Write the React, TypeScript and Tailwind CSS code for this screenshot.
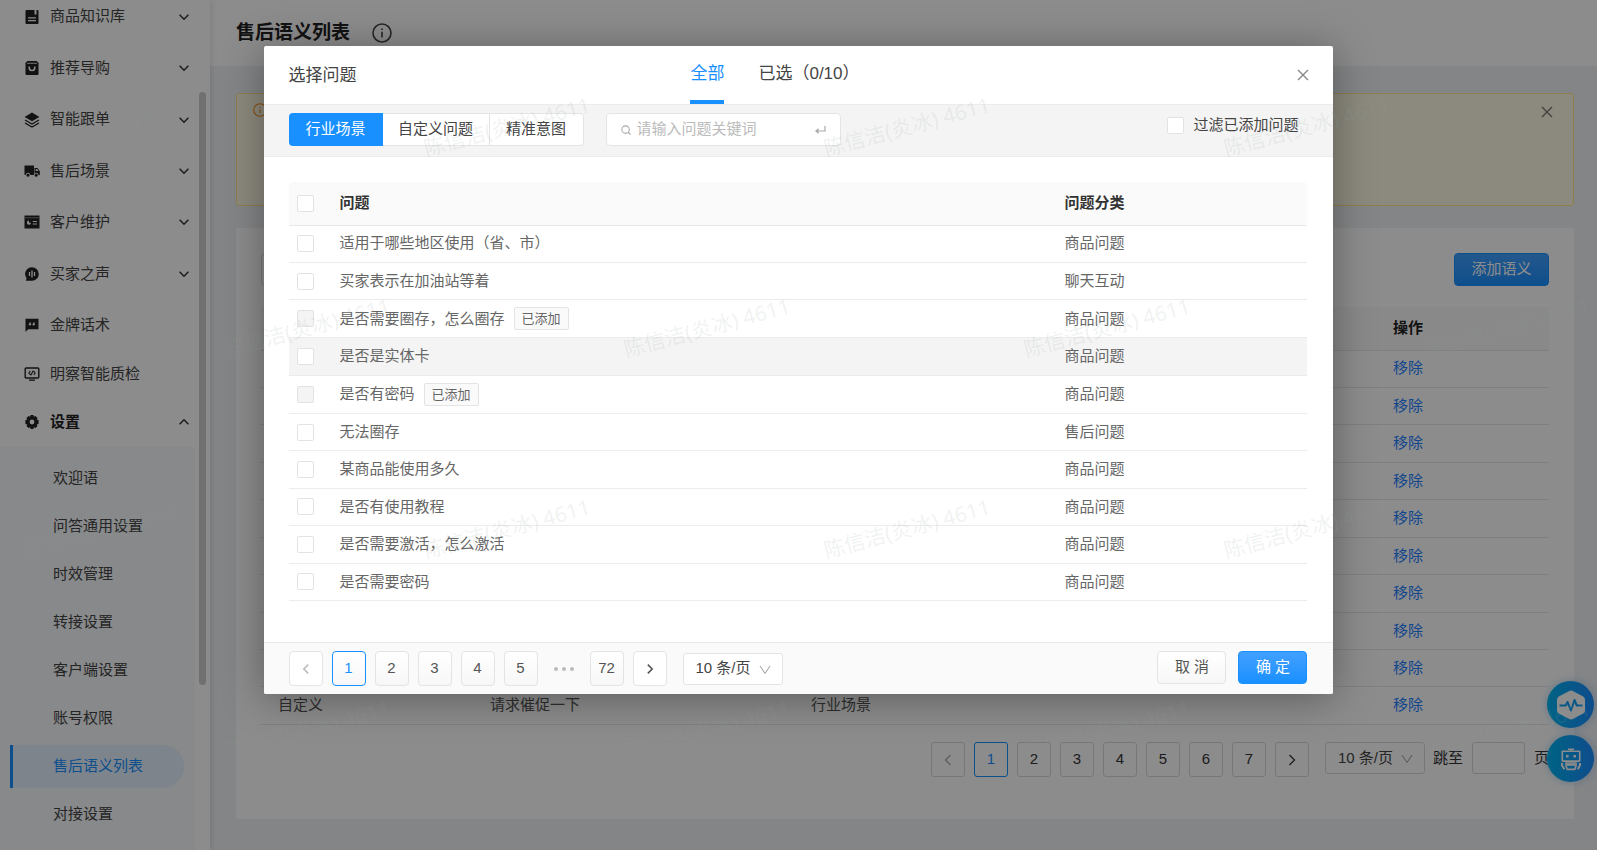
import type { ReactNode } from "react";

const sans = "font-['Liberation_Sans','Noto_Sans_CJK_SC',sans-serif]";

/* ---------- icons ---------- */

function Chevron({ dir, className }: { dir: "up" | "down" | "left" | "right"; className?: string }) {
  const d = {
    up: "M3 10.5 8 5.5l5 5",
    down: "M3 5.5l5 5 5-5",
    left: "M10.5 3l-5 5 5 5",
    right: "M5.5 3l5 5-5 5",
  }[dir];
  return (
    <svg viewBox="0 0 16 16" fill="none" stroke="currentColor" aria-hidden="true" className={className}>
      <path d={d} />
    </svg>
  );
}

function CloseIcon({ className }: { className?: string }) {
  return (
    <svg viewBox="0 0 12 12" fill="none" stroke="currentColor" strokeWidth="1.4" aria-hidden="true" className={className}>
      <path d="M1 1l10 10M11 1L1 11" />
    </svg>
  );
}

function InfoIcon({ className }: { className?: string }) {
  return (
    <svg viewBox="0 0 20 20" fill="none" stroke="currentColor" strokeWidth="1.6" aria-hidden="true" className={className}>
      <circle cx="10" cy="10" r="9" />
      <path d="M10 8.8v5.6" />
      <circle cx="10" cy="6.2" r="0.5" fill="currentColor" strokeWidth="1" />
    </svg>
  );
}

function MenuSvg({ children }: { children: ReactNode }) {
  return (
    <svg viewBox="0 0 16 16" fill="currentColor" aria-hidden="true" className="size-4 shrink-0 text-[#222]">
      {children}
    </svg>
  );
}

const icons = {
  book: (
    <MenuSvg>
      <path d="M2.5 1h8v4.5h2V1h1a1 1 0 0 1 1 1v12a1 1 0 0 1-1 1h-11a1 1 0 0 1-1-1V2a1 1 0 0 1 1-1z" />
      <path d="M4 8.8h8M4 11.6h8" stroke="#fff" strokeWidth="1.2" />
    </MenuSvg>
  ),
  bag: (
    <MenuSvg>
      <path d="M3.2 1h9.6l1.7 2.2V14a1 1 0 0 1-1 1h-11a1 1 0 0 1-1-1V3.200z" />
      <path d="M3 3.300h10" stroke="#fff" strokeWidth="0.8" />
      <path d="M5.200 6.500v1.200a2.800 2.800 0 0 0 5.600 0V6.500" fill="none" stroke="#fff" strokeWidth="1.500" />
    </MenuSvg>
  ),
  layers: (
    <MenuSvg>
      <path d="M8 .6 15.400 4.900 8 9.200.6 4.900z" />
      <path d="M1 8l7 4.100L15 8M1 11l7 4.100L15 11" fill="none" stroke="currentColor" strokeWidth="1.300" />
    </MenuSvg>
  ),
  truck: (
    <MenuSvg>
      <path d="M.5 2.500h9.500v9.500H.5zM10.500 5h3l2.300 3.300V12h-5.300z" />
      <circle cx="4" cy="12.200" r="2" stroke="#fff" strokeWidth="0.900" />
      <circle cx="12.200" cy="12.200" r="2" stroke="#fff" strokeWidth="0.900" />
      <path d="M11.800 6h1.300l1.300 2h-2.600z" fill="#fff" />
    </MenuSvg>
  ),
  card: (
    <MenuSvg>
      <path d="M.5 1.500h15v13H.5z" />
      <path d="M.5 3.800h15" stroke="#999" strokeWidth="0.800" />
      <path d="M5 6.600a2 2 0 0 0 0 4.200 2 2 0 0 0 2-2H5z" fill="#fff" />
      <path d="M8.800 7.500H13M8.800 10H13" stroke="#fff" strokeWidth="1.200" />
    </MenuSvg>
  ),
  voice: (
    <MenuSvg>
      <path d="M8 1.200a6.800 6.800 0 1 1 0 13.600H1.800l.8-2.600A6.800 6.800 0 0 1 8 1.200z" />
      <path d="M5.500 6v4M8 4.400v7.200M10.500 6v4" stroke="#fff" strokeWidth="1.300" />
    </MenuSvg>
  ),
  quote: (
    <MenuSvg>
      <path d="M1.500 1.800h13v10.500H4.300L1.500 14.800z" />
      <path
        d="M7 4.900C5.300 5.400 4.700 6.500 4.700 8.200h2.400V6.400H6.200C6.300 5.900 6.600 5.600 7 5.500zM10.800 4.900C9.100 5.400 8.500 6.500 8.500 8.200h2.400V6.400H10c.1-.5.4-.8.8-.9z"
        fill="#fff"
      />
    </MenuSvg>
  ),
  monitor: (
    <MenuSvg>
      <rect x="1.200" y="2" width="13.600" height="10" rx="1" fill="none" stroke="currentColor" strokeWidth="1.400" />
      <path d="M5 13.500h6v1.300H5z" />
      <path d="M6.300 5.200 4.900 7l1.600 2M9.700 9l1.400-2-1.600-2M9.200 4.700 6.800 9.300" fill="none" stroke="currentColor" strokeWidth="1.100" />
    </MenuSvg>
  ),
  gear: (
    <MenuSvg>
      <path
        fillRule="evenodd"
        d="M6.600 1h2.800l.5 1.700 1.600-.8 2 2-.8 1.600L14.600 6v4l-1.900.5.800 1.600-2 2-1.600-.8L9.400 15H6.600l-.5-1.700-1.600.8-2-2 .8-1.600L1.400 10V6l1.900-.5-.8-1.600 2-2 1.600.8zM8 5.600a2.400 2.400 0 1 0 0 4.800 2.400 2.400 0 0 0 0-4.800z"
      />
    </MenuSvg>
  ),
};

/* ---------- side menu ---------- */

const menu = [
  { label: "商品知识库", icon: icons.book, open: true },
  { label: "推荐导购", icon: icons.bag, open: true },
  { label: "智能跟单", icon: icons.layers, open: true },
  { label: "售后场景", icon: icons.truck, open: true },
  { label: "客户维护", icon: icons.card, open: true },
  { label: "买家之声", icon: icons.voice, open: true },
  { label: "金牌话术", icon: icons.quote, open: false },
];

const settings = ["欢迎语", "问答通用设置", "时效管理", "转接设置", "客户端设置", "账号权限", "售后语义列表", "对接设置"];

function Sidebar() {
  return (
    <aside className="relative z-10 flex w-[210px] shrink-0 overflow-hidden bg-white text-[15px] text-[#444] shadow-[1px_0_6px_rgba(0,0,0,0.12)]">
      <nav className="-mt-[9px] w-[195px]">
        <ul className="grid h-[360px] grid-rows-7">
          {menu.map((m) => (
            <li key={m.label} className="grid">
              <a href="#" className="flex items-center pr-1 pl-6">
                {m.icon}
                <span className="ml-[10px] flex-1">{m.label}</span>
                {m.open && <Chevron dir="down" className="size-[14px] stroke-[1.7] text-[#333]" />}
              </a>
            </li>
          ))}
        </ul>
        <ul>
          <li>
            <a href="#" className="flex h-[46px] items-center pl-6">
              {icons.monitor}
              <span className="ml-[10px]">明察智能质检</span>
            </a>
          </li>
          <li>
            <a href="#" className="flex h-[50px] items-center pr-1 pl-6 font-bold text-[#222]">
              {icons.gear}
              <span className="ml-[10px] flex-1">设置</span>
              <Chevron dir="up" className="size-[14px] stroke-[1.7] text-[#333]" />
            </a>
            <ul className="bg-[#f7f9fc] pt-[7px] pb-10">
              {settings.map((s) =>
                s === "售后语义列表" ? (
                  <li key={s} className="flex h-12 items-center pr-[11px] pl-[10px]">
                    <a
                      href="#"
                      aria-current="page"
                      className="flex h-[43px] flex-1 items-center rounded-r-full border-l-[3px] border-[#1890ff] bg-[#e3f0ff] pl-10 text-[#1890ff]"
                    >
                      {s}
                    </a>
                  </li>
                ) : (
                  <li key={s}>
                    <a href="#" className="flex h-12 items-center pl-[53px]">
                      {s}
                    </a>
                  </li>
                ),
              )}
            </ul>
          </li>
        </ul>
      </nav>
      <div className="ml-1 pt-[92px]">
        <div className="h-[593px] w-[7px] rounded-full bg-[#cdcdcd]" />
      </div>
    </aside>
  );
}

/* ---------- shared controls ---------- */

function PageSize({ label, className }: { label: string; className: string }) {
  return (
    <div className="relative">
      <select aria-label={label} className={`h-8 w-[100px] appearance-none rounded-[3px] border pl-3 text-[15px] ${className}`}>
        <option>10 条/页</option>
      </select>
      <svg
        viewBox="0 0 12 12"
        fill="none"
        stroke="currentColor"
        aria-hidden="true"
        className="pointer-events-none absolute top-[11px] right-3 size-3 text-[#999]"
      >
        <path d="M1 2l5 7.500L11 2" />
      </svg>
    </div>
  );
}

/* ---------- page behind the dialog ---------- */

const outerRows = Array.from({ length: 10 }, (_, i) => i);

function OuterPager() {
  const box = "flex h-[35px] w-[34px] items-center justify-center rounded-[3px] border";
  return (
    <div className="mt-[17px] flex items-start justify-end text-[15px] text-[#333]">
      <div className="mr-4 flex gap-[9px]">
        <button aria-label="上一页" className={`${box} border-[#d9d9d9] text-[#aaa]`}>
          <Chevron dir="left" className="size-4 stroke-[1.3]" />
        </button>
        {["1", "2", "3", "4", "5", "6", "7"].map((n) => (
          <button key={n} className={`${box} ${n === "1" ? "border-[#1890ff] text-[#1890ff]" : "border-[#d9d9d9]"}`}>
            {n}
          </button>
        ))}
        <button aria-label="下一页" className={`${box} border-[#d9d9d9]`}>
          <Chevron dir="right" className="size-4 stroke-[1.3]" />
        </button>
      </div>
      <PageSize label="列表每页条数" className="border-[#d9d9d9] bg-white text-[#444]" />
      <label className="ml-2 flex h-8 items-center gap-[9px]">
        跳至
        <input type="text" className="h-8 w-[53px] rounded-[3px] border border-[#d9d9d9]" />
        页
      </label>
    </div>
  );
}

function Main() {
  return (
    <main className="min-w-0 flex-1 bg-[#f0f2f5]">
      <header className="flex h-[66px] items-center gap-[22px] bg-white pl-[26px]">
        <h1 className="text-[19px] font-bold text-[#222]">售后语义列表</h1>
        <InfoIcon className="size-5 text-[#444]" />
      </header>
      <div className="pt-[27px] pr-[23px] pl-[26px]">
        <div className="flex h-[113px] items-start justify-between rounded-[3px] border border-[#ffe58f] bg-[#fffbe6] px-4 pt-[9px]">
          <InfoIcon className="size-[14px] text-[#fa8c16]" />
          <button aria-label="关闭提示" className="mt-[3px] mr-1 text-[#777]">
            <CloseIcon className="size-3" />
          </button>
        </div>
        <section className="mt-[22px] h-[591px] bg-white px-[25px] pt-[25px]">
          <div className="flex justify-between">
            <input aria-label="搜索语义" className="h-[33px] w-60 rounded-[4px] border border-[#d9d9d9]" />
            <button className="h-[33px] w-[95px] rounded-[4px] border border-[#1890ff] bg-linear-to-b from-[#40a0ff] to-[#1890ff] text-[15px] text-white">
              添加语义
            </button>
          </div>
          <table className="mt-[21px] h-[418px] w-full table-fixed text-left text-[15px] text-[#555]">
            <thead>
              <tr className="h-[43px] border-b border-[#e8e8e8] bg-[#fafafa] text-[#222]">
                <th className="w-[212px] pl-[17px]">分类</th>
                <th className="w-[321px] pl-[17px]">语义</th>
                <th className="pl-[17px]">类型</th>
                <th className="w-[173px] pl-[17px]">操作</th>
              </tr>
            </thead>
            <tbody>
              {outerRows.map((i) => (
                <tr key={i} className="border-b border-[#e8e8e8]">
                  <td className="pl-[17px]">自定义</td>
                  <td className="pl-[17px]">请求催促一下</td>
                  <td className="pl-[17px]">行业场景</td>
                  <td className="pl-[17px]">
                    <a href="#" className="text-[#1e80ff]">
                      移除
                    </a>
                  </td>
                </tr>
              ))}
            </tbody>
          </table>
          <OuterPager />
        </section>
      </div>
    </main>
  );
}

function FloatingTools() {
  const circle =
    "flex size-[47px] items-center justify-center rounded-full bg-linear-to-r from-[#00b4f0] to-[#1c8cff] shadow-[0_0_8px_rgba(0,120,220,0.3)]";
  return (
    <div className="absolute top-[681px] right-[3px] z-10 flex flex-col gap-[7px]">
      <button aria-label="诊断" className={circle}>
        <svg viewBox="0 0 32 32" className="size-8" aria-hidden="true">
          <path
            d="M13.800 2.200a4 4 0 0 1 4.400 0l10 5.300a4 4 0 0 1 1.800 3.300v10.400a4 4 0 0 1-1.800 3.300l-10 5.300a4 4 0 0 1-4.400 0l-10-5.300A4 4 0 0 1 2 21.200V10.800a4 4 0 0 1 1.800-3.300z"
            fill="#fff"
          />
          <path
            d="M4.500 16.500h6.200l1.800-3.500 3.500 8.500 3.500-10.500 2.300 5.500h5.700"
            fill="none"
            stroke="#12a0f5"
            strokeWidth="2"
            strokeLinejoin="round"
          />
        </svg>
      </button>
      <button aria-label="机器人助手" className={circle}>
        <svg viewBox="0 0 24 24" className="size-6" fill="none" stroke="#fff" strokeWidth="1.600" aria-hidden="true">
          <path d="M9 2.200h6M12 2.200v2" />
          <rect x="3.300" y="4.300" width="17.400" height="9.800" rx="0.500" />
          <path d="M8.300 8v2.600M15.700 8v2.600" strokeWidth="2.600" />
          <path d="M3 16v2.200l2.300 4M21 16v2.200l-2.300 4" strokeWidth="2" />
          <path d="M7 16h10v2.800l-1.300 3.600H8.300L7 18.800z" />
          <path d="M7.500 17.800h9" strokeWidth="2" />
        </svg>
      </button>
    </div>
  );
}

/* ---------- dialog ---------- */

const questions = [
  { text: "适用于哪些地区使用（省、市）", kind: "商品问题" },
  { text: "买家表示在加油站等着", kind: "聊天互动" },
  { text: "是否需要圈存，怎么圈存", kind: "商品问题", added: true },
  { text: "是否是实体卡", kind: "商品问题", hover: true },
  { text: "是否有密码", kind: "商品问题", added: true },
  { text: "无法圈存", kind: "售后问题" },
  { text: "某商品能使用多久", kind: "商品问题" },
  { text: "是否有使用教程", kind: "商品问题" },
  { text: "是否需要激活，怎么激活", kind: "商品问题" },
  { text: "是否需要密码", kind: "商品问题" },
];

const check =
  "block size-[17px] appearance-none rounded-[2px] border border-[#e3e3e3] bg-white disabled:bg-[#f4f4f4]";

function DialogFooter() {
  const box = "flex h-[35px] w-[34px] items-center justify-center rounded-[4px] border";
  const plain = "border-[#e4e4e4] bg-linear-to-b from-white to-[#f7f7f7]";
  return (
    <footer className="flex h-[52px] items-start justify-between rounded-b-[2px] border-t border-[#e8e8e8] bg-[#fafafa] pt-2 pr-[26px] pl-[25px] text-[15px] text-[#555]">
      <div className="flex items-center">
        <div className="mr-4 flex gap-[9px]">
          <button aria-label="上一页问题" className={`${box} border-[#e4e4e4] bg-white text-[#bbb]`}>
            <Chevron dir="left" className="size-[14px] stroke-[1.8]" />
          </button>
          {["1", "2", "3", "4", "5"].map((n) => (
            <button
              key={n}
              className={`${box} ${n === "1" ? "border-[#1890ff] bg-linear-to-b from-white to-[#f7f7f7] text-[#1890ff]" : plain}`}
            >
              {n}
            </button>
          ))}
          <button aria-label="向后五页" className="flex h-[35px] w-[34px] items-center justify-center gap-1">
            <span className="size-1 rounded-full bg-[#bbb]" />
            <span className="size-1 rounded-full bg-[#bbb]" />
            <span className="size-1 rounded-full bg-[#bbb]" />
          </button>
          <button className={`${box} ${plain}`}>72</button>
          <button aria-label="下一页问题" className={`${box} border-[#e4e4e4] bg-white`}>
            <Chevron dir="right" className="size-[14px] stroke-[1.8]" />
          </button>
        </div>
        <PageSize label="问题每页条数" className="border-[#e4e4e4] bg-white text-[#444]" />
      </div>
      <div className="flex gap-3">
        <button className="h-[33px] w-[69px] rounded-[4px] border border-[#e4e4e4] bg-linear-to-b from-white to-[#f7f7f7]">
          取 消
        </button>
        <button className="h-[33px] w-[69px] rounded-[4px] border border-[#1890ff] bg-linear-to-b from-[#40a0ff] to-[#1890ff] text-white">
          确 定
        </button>
      </div>
    </footer>
  );
}

function QuestionDialog() {
  return (
    <div
      role="dialog"
      aria-labelledby="dialog-title"
      className="w-[67%] rounded-[2px] bg-white shadow-[0_4px_40px_rgba(0,0,0,0.35)]"
    >
      <header className="grid h-[58px] grid-cols-[1fr_auto_1fr] pr-6 pl-[25px] text-[17px] text-[#444]">
        <h2 id="dialog-title" className="self-center pt-[2px]">
          选择问题
        </h2>
        <div role="tablist" className="flex gap-[34px] pr-12">
          <button role="tab" aria-selected="true" className="border-b-4 border-[#1890ff] pt-[2px] text-[#1890ff]">
            全部
          </button>
          <button role="tab" aria-selected="false" className="border-b-4 border-transparent pt-[2px]">
            已选（0/10）
          </button>
        </div>
        <button aria-label="关闭" className="self-center justify-self-end text-[#888]">
          <CloseIcon className="size-3" />
        </button>
      </header>

      <div className="flex h-[53px] items-start border-y border-[#ececec] bg-[#f4f4f4] pt-2 pr-[26px] pl-[25px] text-[15px] text-[#444]">
        <div className="flex h-[33px]">
          <button className="w-[94px] rounded-l-[4px] bg-[#1890ff] text-white">行业场景</button>
          <button className="w-[107px] border-y border-r border-[#e4e4e4] bg-white">自定义问题</button>
          <button className="w-[94px] rounded-r-[4px] border-y border-r border-[#e4e4e4] bg-white">精准意图</button>
        </div>
        <div className="ml-[22px] flex h-[33px] w-[235px] items-center rounded-[4px] border border-[#e4e4e4] bg-white pr-[14px] pl-[14px] text-[#aaa]">
          <svg viewBox="0 0 12 12" fill="none" stroke="currentColor" strokeWidth="1.300" className="size-[10px]" aria-hidden="true">
            <circle cx="5.500" cy="5.500" r="4.500" />
            <path d="M8.700 8.700 11.500 11.500" />
          </svg>
          <input
            type="text"
            aria-label="问题关键词"
            placeholder="请输入问题关键词"
            className="ml-[6px] min-w-0 flex-1 outline-none placeholder:text-[#bbb]"
          />
          <svg viewBox="0 0 12 12" fill="none" stroke="currentColor" strokeWidth="1.200" className="size-3" aria-hidden="true">
            <path d="M11 2v5H2" />
            <path d="M4.500 4 1 7l3.500 3z" fill="currentColor" stroke="none" />
          </svg>
        </div>
        <label className="mr-[9px] ml-auto flex h-6 items-center gap-[9px]">
          <input type="checkbox" className={check} />
          过滤已添加问题
        </label>
      </div>

      <div className="pt-[25px] pr-[26px] pb-[41px] pl-[25px]">
        <table className="h-[419px] w-full table-fixed text-left text-[15px] text-[#666]">
          <thead>
            <tr className="h-[43px] border-b border-[#e8e8e8] bg-[#fafafa] text-[#333]">
              <th className="w-[51px] rounded-tl-[4px] pl-2">
                <input type="checkbox" aria-label="全选" className={check} />
              </th>
              <th>问题</th>
              <th className="w-[260px] rounded-tr-[4px] pl-[17px]">问题分类</th>
            </tr>
          </thead>
          <tbody>
            {questions.map((q) => (
              <tr key={q.text} className={`border-b border-[#ececec] ${q.hover ? "bg-[#f4f4f4]" : ""}`}>
                <td className="pl-2">
                  <input type="checkbox" aria-label={q.text} disabled={q.added} className={check} />
                </td>
                <td>
                  <div className="flex items-center gap-[9px]">
                    {q.text}
                    {q.added && (
                      <span className="flex h-[23px] items-center rounded-[2px] border border-[#e4e4e4] bg-[#fafafa] px-[7px] text-[13px]">
                        已添加
                      </span>
                    )}
                  </div>
                </td>
                <td className="pl-[17px]">{q.kind}</td>
              </tr>
            ))}
          </tbody>
        </table>
      </div>

      <DialogFooter />
    </div>
  );
}

/* ---------- watermark ---------- */

const marks = [0, 1, 2, 3].flatMap((row) =>
  [0, 1, 2, 3].map((col) => ({ x: (row % 2 ? 307 : 107) + col * 400, y: 127 + row * 201 })),
);

function Watermark() {
  return (
    <div aria-hidden="true" className="pointer-events-none absolute inset-0 z-40 overflow-hidden">
      {marks.map((m) => (
        <span
          key={`${m.x}-${m.y}`}
          style={{ left: m.x, top: m.y }}
          className="absolute -translate-x-1/2 -translate-y-1/2 -rotate-15 font-['Noto_Sans','Noto_Sans_CJK_SC',sans-serif] text-[21px] whitespace-nowrap text-[#8fa0a0]/15"
        >
          陈信洁(炎冰) 4611
        </span>
      ))}
    </div>
  );
}

export default function App() {
  return (
    <div className={`relative h-screen overflow-hidden ${sans}`}>
      <div className="flex h-full">
        <Sidebar />
        <Main />
      </div>
      <FloatingTools />
      <div className="absolute inset-0 z-20 bg-black/45" />
      <div className="absolute inset-0 z-30 flex items-start justify-center pt-[46px]">
        <QuestionDialog />
      </div>
      <Watermark />
    </div>
  );
}
